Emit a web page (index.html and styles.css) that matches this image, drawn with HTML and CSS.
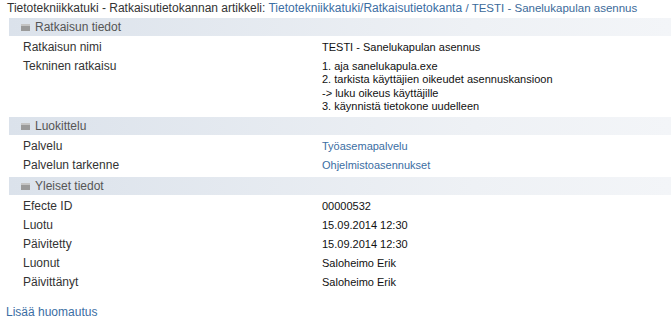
FILE: index.html
```html
<!DOCTYPE html>
<html lang="fi">
<head>
    <meta charset="UTF-8">
    <title>TESTI - Sanelukapulan asennus</title>
    <link rel="stylesheet" href="styles.css">
</head>
<body>
    <div class="page">
        <h1 class="title">
            Tietotekniikkatuki - Ratkaisutietokannan artikkeli:
            <a href="#" class="crumb">Tietotekniikkatuki/Ratkaisutietokanta</a>
            <span class="article">/ TESTI - Sanelukapulan asennus</span>
        </h1>

        <div class="section">
            <div class="section-head"><span class="toggle"></span>Ratkaisun tiedot</div>
            <div class="row">
                <div class="label">Ratkaisun nimi</div>
                <div class="value">TESTI - Sanelukapulan asennus</div>
            </div>
            <div class="row">
                <div class="label">Tekninen ratkaisu</div>
                <div class="value multi">1. aja sanelukapula.exe<br>2. tarkista käyttäjien oikeudet asennuskansioon<br>-&gt; luku oikeus käyttäjille<br>3. käynnistä tietokone uudelleen</div>
            </div>
        </div>

        <div class="section">
            <div class="section-head"><span class="toggle"></span>Luokittelu</div>
            <div class="row">
                <div class="label">Palvelu</div>
                <div class="value"><a href="#">Työasemapalvelu</a></div>
            </div>
            <div class="row">
                <div class="label">Palvelun tarkenne</div>
                <div class="value"><a href="#">Ohjelmistoasennukset</a></div>
            </div>
        </div>

        <div class="section">
            <div class="section-head"><span class="toggle"></span>Yleiset tiedot</div>
            <div class="row">
                <div class="label">Efecte ID</div>
                <div class="value">00000532</div>
            </div>
            <div class="row">
                <div class="label">Luotu</div>
                <div class="value">15.09.2014 12:30</div>
            </div>
            <div class="row">
                <div class="label">Päivitetty</div>
                <div class="value">15.09.2014 12:30</div>
            </div>
            <div class="row">
                <div class="label">Luonut</div>
                <div class="value">Saloheimo Erik</div>
            </div>
            <div class="row">
                <div class="label">Päivittänyt</div>
                <div class="value">Saloheimo Erik</div>
            </div>
        </div>

        <a href="#" class="add-note">Lisää huomautus</a>
    </div>
</body>
</html>
```

FILE: styles.css
```css
* {
    margin: 0;
    padding: 0;
    box-sizing: border-box;
}

body {
    background: white;
    font-family: 'Liberation Sans', Arial, sans-serif;
    font-size: 12px;
    color: #222;
}

a {
    color: #3b6ea3;
    text-decoration: none;
}

.page {
    padding-left: 6px;
}

.title {
    font-size: 12px;
    font-weight: normal;
    color: #333;
    padding-left: 1px;
    height: 18px;
    line-height: 16px;
    white-space: nowrap;
}

.title .article {
    font-size: 11.5px;
    color: #3b6a9a;
}

.section {
    margin: 0 0 2px 3px;
}

.section-head {
    display: flex;
    align-items: center;
    height: 18px;
    margin-bottom: 2px;
    padding-left: 12px;
    color: #555;
    background: linear-gradient(to right, #dbe2eb, #eef1f5 70%, #f3f5f8);
}

/* pieni kuvake otsikon edessä */
.toggle {
    width: 9px;
    height: 7px;
    margin-right: 5px;
    background: #9a9a9a;
    border-top: 2px solid #c4c4c4;
}

.row {
    display: grid;
    grid-template-columns: 299px 1fr;
    padding: 2px 0 2px 14px;
    height: 19px;
    line-height: 15px;
}

.label {
    color: #333;
}

.value {
    color: #111;
    font-size: 11px;
}

.row:has(.multi) {
    height: auto;
}

.value.multi {
    line-height: 13.3px;
    padding-top: 1px;
}

.add-note {
    display: inline-block;
    margin-top: 11px;
    line-height: 15px;
}
```
